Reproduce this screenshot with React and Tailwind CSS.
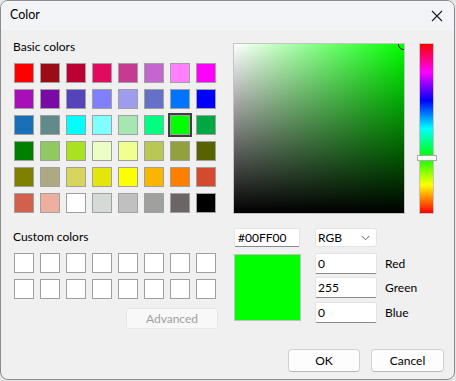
import React from "react";

const basicColors = [
  ["#ff0000", "#9b0c17", "#bc0032", "#e20a5e", "#c63a92", "#c566d0", "#ff80ff", "#ff00ff"],
  ["#a80fb8", "#7a0aa6", "#5443bb", "#8080ff", "#9f9cee", "#6471c6", "#0073ff", "#0000ff"],
  ["#1970b8", "#628a8b", "#00ffff", "#80ffff", "#a6e6b0", "#00ff80", "#00ff00", "#00a843"],
  ["#008000", "#90c862", "#a9e21f", "#ebffc4", "#f0ff90", "#b9c854", "#92a03d", "#586300"],
  ["#808000", "#aca983", "#d6d65c", "#e5e50e", "#ffff00", "#f8b600", "#ff8000", "#d34a2e"],
  ["#d3604d", "#ecafa0", "#ffffff", "#d4dad6", "#c0c0c0", "#a0a09e", "#6b6665", "#000000"],
];

const Swatch = ({ color, selected }) => (
  <div
    className={`w-[20px] h-[20px] border border-[#a0a0a0] ${
      selected ? "outline-2 outline-[#404040]" : ""
    }`}
    style={{ backgroundColor: color }}
  />
);

const TextBox = ({ value, className = "" }) => (
  <div
    className={`bg-white border border-[#e3e3e3] border-b-[#8a8a8a] rounded-[2px] pl-[2px] flex items-center text-[12px] text-black ${className}`}
  >
    {value}
  </div>
);

const App = () => {
  return (
    <div className="w-[456px] h-[381px] bg-[#e6e6e6] font-['Lato',sans-serif] text-[12px] text-black">
      <div className="w-[455px] h-[380px] border border-[#8c8c8c] rounded-lg overflow-hidden bg-[#f0f0f0] flex flex-col">
        {/* Title bar */}
        <div className="h-[29px] bg-[#f2f4f8] flex items-center justify-between pl-[9px] pr-[9px]">
          <span className="text-[12.5px] leading-none">Color</span>
          <svg width="12" height="12" viewBox="0 0 12 12" className="mr-[2px]">
            <path d="M1 1 L11 11 M11 1 L1 11" stroke="#1a1a1a" strokeWidth="1.1" />
          </svg>
        </div>

        <div className="flex">
          {/* Left column */}
          <div className="ml-[12px] pt-[9px] w-[204px] flex flex-col">
            <div className="h-[16px] leading-[16px]">Basic colors</div>
            <div className="mt-[8px] ml-[1px] grid grid-cols-8 gap-[6px] w-[202px]">
              {basicColors.flat().map((c, i) => (
                <Swatch key={i} color={c} selected={i === 22} />
              ))}
            </div>
            <div className="mt-[16px] h-[16px] leading-[16px]">Custom colors</div>
            <div className="mt-[8px] ml-[1px] grid grid-cols-8 gap-[6px] w-[202px]">
              {Array.from({ length: 16 }).map((_, i) => (
                <Swatch key={i} color="#ffffff" />
              ))}
            </div>
            <button className="mt-[9px] ml-[113px] w-[92px] h-[21px] rounded-[3px] bg-[#f8f8f8] border border-[#e6e6e6] text-[#a0a0a0] text-[12px]">
              Advanced
            </button>
          </div>

          {/* Right column */}
          <div className="ml-[16px] pt-[13px] flex flex-col">
            <div className="flex">
              <div className="relative w-[172px] h-[171px] border border-[#c4c4c4] overflow-hidden bg-[linear-gradient(to_top,#000,transparent),linear-gradient(to_right,#fff,#00ff00)]">
                <div className="absolute -top-[5px] -right-[5px] w-[11px] h-[11px] rounded-full border-[1.5px] border-black" />
              </div>
              <div className="relative ml-[14px] w-[15px] h-[171px] border border-[#c4c4c4] bg-[linear-gradient(to_bottom,#ff0000,#ff00ff,#0000ff,#00ffff,#00ff00,#ffff00,#ff0000)]">
                <div className="absolute top-[111px] -left-[3px] w-[20px] h-[6px] bg-white border border-[#a8a8a8]" />
              </div>
            </div>

            <div className="mt-[14px] flex">
              <TextBox value="#00FF00" className="ml-[1px] w-[66px] h-[19px] pl-[3px]" />
              <div className="ml-[15px] w-[62px] h-[19px] bg-white border border-[#e3e3e3] rounded-[3px] flex items-center justify-between pl-[2px] pr-[6px]">
                <span>RGB</span>
                <svg width="9" height="6" viewBox="0 0 9 6">
                  <path d="M0.5 0.8 L4.5 4.8 L8.5 0.8" fill="none" stroke="#606060" strokeWidth="1" />
                </svg>
              </div>
            </div>

            <div className="mt-[6px] flex">
              <div className="mt-[1px] ml-[1px] w-[67px] h-[67px] bg-[#00ff00] border border-[#c0c0c0]" />
              <div className="ml-[14px] flex flex-col">
                <div className="flex items-center">
                  <TextBox value="0" className="w-[62px] h-[21px]" />
                  <span className="ml-[8px]">Red</span>
                </div>
                <div className="mt-[3px] flex items-center">
                  <TextBox value="255" className="w-[62px] h-[21px]" />
                  <span className="ml-[8px]">Green</span>
                </div>
                <div className="mt-[4px] flex items-center">
                  <TextBox value="0" className="w-[62px] h-[21px]" />
                  <span className="ml-[8px]">Blue</span>
                </div>
              </div>
            </div>
          </div>
        </div>

        {/* Footer */}
        <div className="mt-[20px] flex justify-end gap-[11px] pr-[10px]">
          <button className="w-[72px] h-[23px] rounded-[4px] bg-[#fdfdfd] border border-[#d0d0d0] border-b-[#b8b8b8] text-[12px]">
            OK
          </button>
          <button className="w-[73px] h-[23px] rounded-[4px] bg-[#fdfdfd] border border-[#d0d0d0] border-b-[#b8b8b8] text-[12px]">
            Cancel
          </button>
        </div>
      </div>
    </div>
  );
};

export default App;
